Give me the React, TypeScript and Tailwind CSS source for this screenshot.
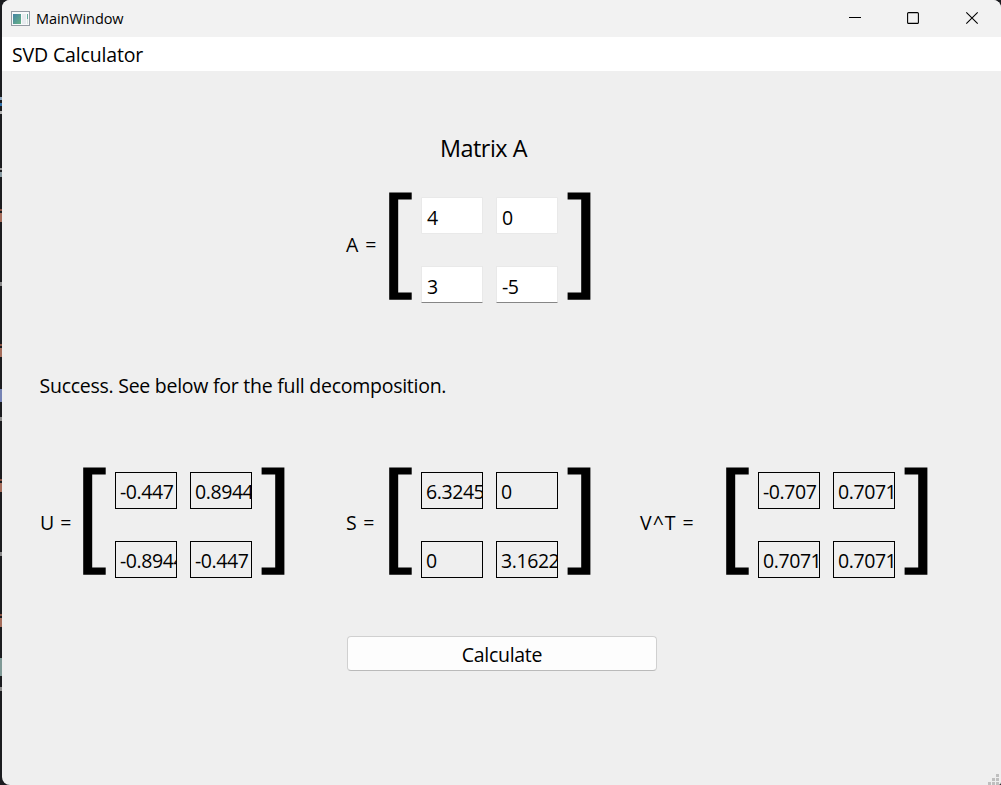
type Grid = [string, string, string, string];

const marks = [
  { y: 97, h: 3, c: '#8fa6bd' },
  { y: 103, h: 3, c: '#2f6fa8' },
  { y: 111, h: 3, c: '#b5b5b5' },
  { y: 168, h: 2, c: '#9a9a9a' },
  { y: 172, h: 5, c: '#8799a0' },
  { y: 209, h: 2, c: '#8a5444' },
  { y: 213, h: 9, c: '#a56d5c' },
  { y: 282, h: 4, c: '#8a8a8a' },
  { y: 344, h: 2, c: '#8a5444' },
  { y: 348, h: 9, c: '#a56d5c' },
  { y: 389, h: 13, c: '#7583b4' },
  { y: 417, h: 4, c: '#8a8a8a' },
  { y: 479, h: 2, c: '#8a5444' },
  { y: 483, h: 9, c: '#a56d5c' },
  { y: 552, h: 4, c: '#8a8a8a' },
  { y: 614, h: 2, c: '#8a5444' },
  { y: 618, h: 9, c: '#a56d5c' },
  { y: 658, h: 18, c: '#7f9996' },
  { y: 687, h: 4, c: '#8a8a8a' },
];

function Bracket({ flip = false }: { flip?: boolean }) {
  return (
    <svg width="24" height="108" viewBox="0 0 24 108" className="shrink-0">
      <path
        d={flip ? 'M.6 .4H23.4V107.7H.6V100.4H14.2V7.6H.6Z' : 'M.2 .4H22.7V7.6H9.2V100.4H22.7V107.7H.2Z'}
        fill="#000"
      />
    </svg>
  );
}

function Matrix({ values, editable = false }: { values: Grid; editable?: boolean }) {
  return (
    <div className="flex h-[111px] w-[201px] shrink-0 items-start gap-2">
      <Bracket />
      <div className="mr-px grid shrink-0 grid-cols-[62px_62px] gap-x-[13px] gap-y-8 pt-[5px]">
        {values.map((v, i) => (
          <div
            key={i}
            className={
              'h-[37px] overflow-hidden whitespace-nowrap border text-[19.5px] leading-[35px] tracking-[-0.42px] ' +
              (editable
                ? 'rounded-[1px] border-[#e9e9e9] bg-white bg-clip-padding pl-[5px] pt-[2px] ' + (i > 1 ? 'border-b-[#868686]' : '')
                : 'border-black pl-1 pt-px')
            }
          >
            {v}
          </div>
        ))}
      </div>
      <Bracket flip />
    </div>
  );
}

export default function App() {
  return (
    <div className="relative flex h-[785px] w-[1001px] overflow-hidden bg-[#1b1c1f] pl-[2px] font-['Open_Sans','Noto_Sans',sans-serif] text-black">
      <svg width="2" height="785" className="absolute left-0 top-0">
        {marks.map((m) => (
          <rect key={m.y} x="0" y={m.y} width="2" height={m.h} fill={m.c} />
        ))}
      </svg>
      <div className="relative flex flex-1 flex-col overflow-hidden rounded-[8px] rounded-br-[3px] bg-[#efefef]">
        <header className="flex h-[37px] shrink-0 items-center bg-[#f2f2f2] pl-[9px]">
          <svg width="19" height="15" viewBox="0 0 19 15" className="shrink-0">
            <defs>
              <linearGradient id="pane" x1="0" y1="0" x2="1" y2="1">
                <stop offset="0" stopColor="#4383a4" />
                <stop offset="1" stopColor="#69b486" />
              </linearGradient>
            </defs>
            <rect x=".5" y=".5" width="18" height="14" fill="#f8f9fb" stroke="#949ba4" />
            <rect x="2" y="3" width="8" height="10" fill="url(#pane)" />
            <rect x="11" y="3" width="4" height="10" fill="#e7ebef" />
            <rect x="16" y="3" width="1" height="5" fill="#65ad9e" />
            <rect x="16" y="8" width="1" height="5" fill="#d5e4df" />
          </svg>
          <span className="ml-[6px] text-[14.5px] leading-[20px] tracking-[-0.1px]">MainWindow</span>
          <svg width="130" height="14" viewBox="0 0 130 14" className="mb-px ml-auto mr-[22px]" fill="none" stroke="#000" strokeWidth="1.1">
            <path d="M0 6.5H12" />
            <rect x="58.6" y="1.6" width="10.8" height="10.8" rx="1" />
            <path d="M117.3 1.3L128.7 12.7M128.7 1.3L117.3 12.7" />
          </svg>
        </header>
        <nav className="h-[34px] shrink-0 bg-white pl-[10px] text-[19.5px] leading-[36px] tracking-[-0.15px]">
          <span>SVD Calculator</span>
        </nav>
        <main className="flex flex-1 flex-col text-[19.5px]">
          <h1 className="mt-[61px] h-[33px] pl-[438px] text-[23.4px] leading-[32px] tracking-[-0.5px]">
            <span>Matrix A</span>
          </h1>
          <section className="mt-[27px] flex h-[111px] pl-[344px]">
            <span className="w-[43px] shrink-0 leading-[105px] tracking-[0.9px]">A =</span>
            <Matrix values={['4', '0', '3', '-5']} editable />
          </section>
          <p className="mt-[68px] h-[30px] pl-[37.5px] leading-[30px] tracking-[-0.26px]">
            <span>Success. See below for the full decomposition.</span>
          </p>
          <section className="mt-[66px] flex h-[111px] pl-[38px] leading-[111px]">
            <span className="w-[43px] shrink-0 tracking-[0.5px]">U =</span>
            <Matrix values={['-0.447', '0.8944', '-0.8944', '-0.447']} />
            <span className="ml-[62px] w-[43px] shrink-0 tracking-[0.7px]">S =</span>
            <Matrix values={['6.3245', '0', '0', '3.1622']} />
            <span className="ml-[50px] w-[86px] shrink-0 tracking-[1px]">V^T =</span>
            <Matrix values={['-0.707', '0.7071', '0.7071', '0.7071']} />
          </section>
          <button className="ml-[345px] mt-[58px] h-[35px] w-[310px] rounded-[4px] border border-[#d0d0d0] border-b-[#bababa] bg-[#fdfdfd] pt-[3px] leading-[30px] tracking-[-0.3px]">
            <span>Calculate</span>
          </button>
        </main>
        <svg width="13" height="12" viewBox="0 0 13 12" className="absolute bottom-0 right-0" fill="#bfbfbf">
          <path d="M8 1h3v3H8zM4 5h3v3H4zM8 5h3v3H8zM0 9h3v3H0zM4 9h3v3H4zM8 9h3v3H8z" />
        </svg>
      </div>
    </div>
  );
}
